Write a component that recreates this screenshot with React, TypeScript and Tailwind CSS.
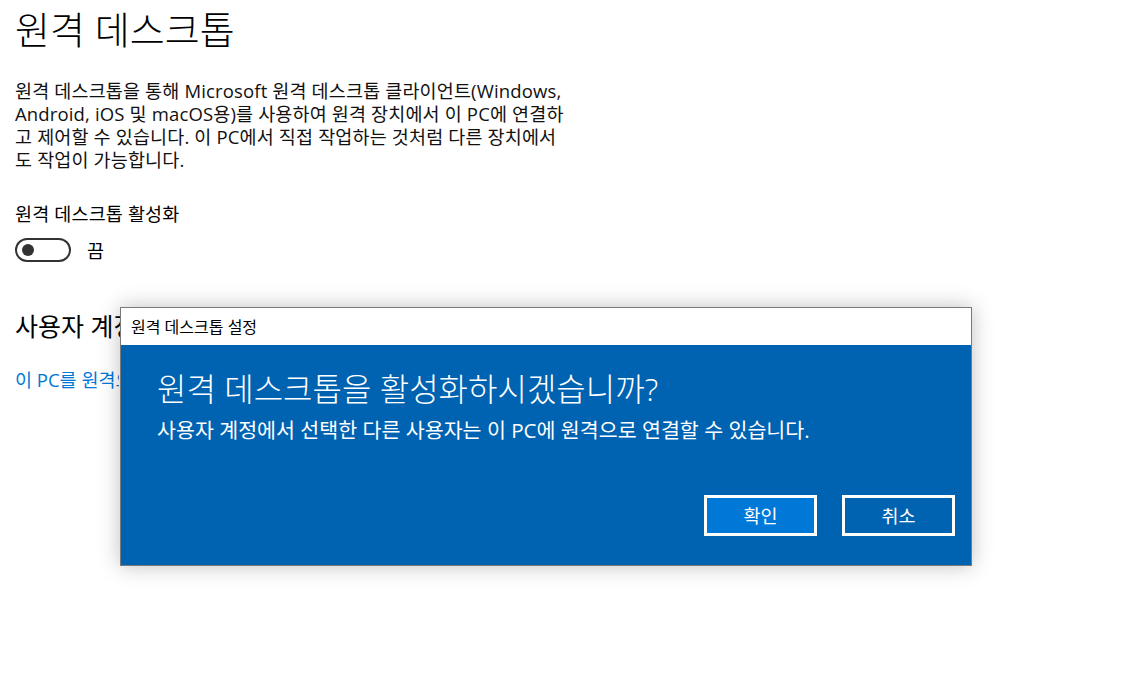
import React from "react";

const font = { fontFamily: '"Open Sans", "Noto Sans CJK KR", sans-serif' };

export default function App() {
  return (
    <div
      className="relative w-[1135px] h-[680px] bg-white text-black overflow-hidden"
      style={font}
    >
      <div className="pl-[15px] pt-[5px]">
        <h1 className="text-[38px] leading-[48px] font-light">원격 데스크톱</h1>
        <div className="mt-[26px] text-[18.5px] leading-[23px] tracking-[0.15px] text-[#111]">
          <div>원격 데스크톱을 통해 Microsoft 원격 데스크톱 클라이언트(Windows,</div>
          <div>Android, iOS 및 macOS용)를 사용하여 원격 장치에서 이 PC에 연결하</div>
          <div>고 제어할 수 있습니다. 이 PC에서 직접 작업하는 것처럼 다른 장치에서</div>
          <div>도 작업이 가능합니다.</div>
        </div>
        <div className="mt-[31px] text-[18.5px] leading-[23px] tracking-[0.15px]">원격 데스크톱 활성화</div>
        <div className="mt-[13px] flex items-center">
          <div className="w-[56px] h-[24px] rounded-full border-[2.5px] border-[#333] flex items-center pl-[5px]">
            <div className="w-[12px] h-[12px] rounded-full bg-[#333]" />
          </div>
          <span className="ml-[16px] text-[18.5px] leading-[23px]">끔</span>
        </div>
        <div className="mt-[48px] w-[105px] overflow-hidden whitespace-nowrap">
          <h2 className="text-[25px] leading-[32px]">사용자 계정</h2>
        </div>
        <div className="mt-[26px] w-[104px] overflow-hidden whitespace-nowrap text-[18.5px] leading-[23px] text-[#0078d7]">
          이 PC를 원격으로 액세스할 수 있는 사용자 선택
        </div>
      </div>

      <div className="absolute left-[120px] top-[307px] w-[852px] h-[259px] border border-[#7a7a7a] shadow-[0_0_20px_rgba(0,0,0,0.25)] flex flex-col">
        <div className="h-[37px] bg-white flex items-center pl-[10px] text-[16px] text-black">
          원격 데스크톱 설정
        </div>
        <div className="flex-1 bg-[#0063b1] text-white flex flex-col pl-[36px] pr-[16px]">
          <div className="mt-[24px] text-[32px] leading-[40px] font-light">
            원격 데스크톱을 활성화하시겠습니까?
          </div>
          <div className="mt-[8px] text-[20.6px] leading-[26px]">
            사용자 계정에서 선택한 다른 사용자는 이 PC에 원격으로 연결할 수 있습니다.
          </div>
          <div className="mt-auto mb-[29px] flex justify-end gap-[25px]">
            <button className="w-[113px] h-[41px] border-[3px] border-white bg-[#0078d7] text-[18.5px] text-white">
              확인
            </button>
            <button className="w-[113px] h-[41px] border-[3px] border-white bg-[#0063b1] text-[18.5px] text-white">
              취소
            </button>
          </div>
        </div>
      </div>
    </div>
  );
}
